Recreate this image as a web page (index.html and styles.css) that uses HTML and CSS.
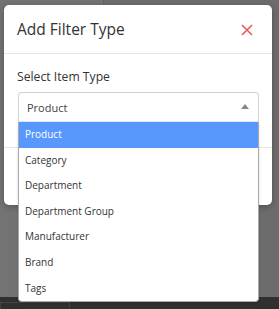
FILE: index.html
```html
<!DOCTYPE html>
<html>
<head>
<meta charset="utf-8">
<link rel="stylesheet" href="styles.css">
</head>
<body>
<div class="page">
  <div class="page-main">
    <div class="page-col left"></div>
    <div class="page-col right"></div>
  </div>
  <div class="page-bottom"><div class="page-tab"></div></div>
</div>

<div class="modal">
  <div class="modal-header">
    <h4 class="modal-title">Add Filter Type</h4>
    <svg class="close" width="12" height="12" viewBox="0 0 12 12"><path d="M1 1 L11 11 M11 1 L1 11" stroke="#e8595c" stroke-width="1.6" fill="none"/></svg>
  </div>
  <div class="modal-body">
    <label class="field-label">Select Item Type</label>
    <div class="select">
      <span class="select-value">Product</span>
      <span class="caret"></span>
    </div>
  </div>
  <div class="modal-footer"></div>
</div>

<ul class="dropdown">
  <li class="opt active">Product</li>
  <li class="opt">Category</li>
  <li class="opt">Department</li>
  <li class="opt">Department Group</li>
  <li class="opt">Manufacturer</li>
  <li class="opt">Brand</li>
  <li class="opt">Tags</li>
</ul>
</body>
</html>
```
FILE: styles.css
```css
html, body {
  margin: 0;
  padding: 0;
  width: 279px;
  height: 309px;
  overflow: hidden;
  font-family: "Open Sans", "Noto Sans", sans-serif;
}
body {
  background: #6e6e6e;
  position: relative;
}
.page {
  display: flex;
  flex-direction: column;
  height: 309px;
}
.page-main {
  flex: 1;
  display: flex;
}
.page-col.left {
  width: 103px;
  border-right: 1px solid #666;
  background: #737373;
}
.page-col.right {
  flex: 1;
  background: #6c6c6c;
}
.page-bottom {
  height: 12px;
  background: #303030;
  padding-top: 5px;
  box-sizing: border-box;
}
.page-tab {
  width: 68px;
  height: 8px;
  border: 1px solid #444;
  border-bottom: none;
}

.modal {
  position: absolute;
  left: 4px;
  top: 5px;
  width: 268px;
  height: 200px;
  background: #fff;
  border-radius: 5px;
  box-shadow: 0 2px 6px rgba(0,0,0,0.25);
  display: flex;
  flex-direction: column;
}
.modal-header {
  height: 49px;
  box-sizing: border-box;
  border-bottom: 1px solid #e5e5e5;
  display: flex;
  align-items: center;
  justify-content: space-between;
  padding: 0 19px 0 13px;
}
.modal-title {
  margin: 0;
  font-size: 15.5px;
  font-weight: 400;
  color: #333;
  padding-bottom: 1px;
}
.close {
  display: block;
  margin-top: 1px;
}
.modal-body {
  padding: 14px 13px 0 13px;
  height: 94px;
  box-sizing: border-box;
  border-bottom: 1px solid #e5e5e5;
}
.field-label {
  display: block;
  font-size: 12.2px;
  color: #333;
  line-height: 18px;
  margin-bottom: 6px;
}
.select {
  height: 30px;
  box-sizing: border-box;
  border: 1px solid #d2d2d2;
  border-bottom-color: #e6e6e6;
  border-radius: 4px 4px 0 0;
  display: flex;
  align-items: center;
  justify-content: space-between;
  padding: 0 9px 0 8px;
  margin-left: 1px;
}
.select-value {
  font-size: 11px;
  color: #444;
}
.caret {
  width: 0;
  height: 0;
  border-left: 4px solid transparent;
  border-right: 4px solid transparent;
  border-bottom: 5px solid #888;
  margin-top: -2px;
}
.modal-footer {
  flex: 1;
}

.dropdown {
  position: absolute;
  left: 18px;
  top: 122px;
  width: 241px;
  box-sizing: border-box;
  margin: 0;
  padding: 0;
  list-style: none;
  background: #fff;
  border: 1px solid #aaa;
  border-top: none;
  border-radius: 0 0 4px 4px;
  box-shadow: 0 2px 3px rgba(0,0,0,0.15);
}
.opt {
  height: 25.6px;
  line-height: 25.6px;
  padding-left: 6px;
  font-size: 10px;
  color: #333;
}
.opt.active {
  background: #5897fb;
  color: #fff;
}
```
